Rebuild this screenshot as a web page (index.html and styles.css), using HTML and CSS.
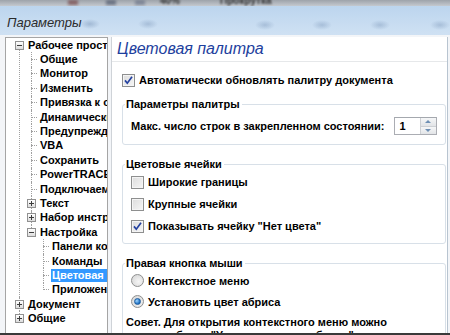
FILE: index.html
```html
<!DOCTYPE html>
<html lang="ru">
<head>
    <meta charset="UTF-8">
    <title>Параметры</title>
    <link rel="stylesheet" href="styles.css">
</head>
<body>
    <div class="screen">
        <div class="behind">
            <span class="smudge s1"></span>
            <span class="smudge s2"></span>
            <span class="smudge s3"></span>
            <span class="behind-text">40%</span>
            <span class="behind-text">Прокрутка</span>
        </div>

        <div class="titlebar">
            <span class="title">Параметры</span>
        </div>

        <div class="dialog">
            <div class="tree">
                <ul class="nodes root">
                    <li class="first">
                        <div class="node"><span class="twisty minus"></span><span class="label">Рабочее пространство</span></div>
                        <ul class="nodes">
                            <li><div class="node"><span class="twisty leaf"></span><span class="label">Общие</span></div></li>
                            <li><div class="node"><span class="twisty leaf"></span><span class="label">Монитор</span></div></li>
                            <li><div class="node"><span class="twisty leaf"></span><span class="label">Изменить</span></div></li>
                            <li><div class="node"><span class="twisty leaf"></span><span class="label">Привязка к объектам</span></div></li>
                            <li><div class="node"><span class="twisty leaf"></span><span class="label">Динамические направляющие</span></div></li>
                            <li><div class="node"><span class="twisty leaf"></span><span class="label">Предупреждения</span></div></li>
                            <li><div class="node"><span class="twisty leaf"></span><span class="label">VBA</span></div></li>
                            <li><div class="node"><span class="twisty leaf"></span><span class="label">Сохранить</span></div></li>
                            <li><div class="node"><span class="twisty leaf"></span><span class="label">PowerTRACE</span></div></li>
                            <li><div class="node"><span class="twisty leaf"></span><span class="label">Подключаемые модули</span></div></li>
                            <li><div class="node"><span class="twisty plus"></span><span class="label">Текст</span></div></li>
                            <li><div class="node"><span class="twisty plus"></span><span class="label">Набор инструментов</span></div></li>
                            <li>
                                <div class="node"><span class="twisty minus"></span><span class="label">Настройка</span></div>
                                <ul class="nodes">
                                    <li><div class="node"><span class="twisty leaf"></span><span class="label">Панели команд</span></div></li>
                                    <li><div class="node"><span class="twisty leaf"></span><span class="label">Команды</span></div></li>
                                    <li><div class="node"><span class="twisty leaf"></span><span class="label selected">Цветовая палитра</span></div></li>
                                    <li><div class="node"><span class="twisty leaf"></span><span class="label">Приложения</span></div></li>
                                </ul>
                            </li>
                        </ul>
                    </li>
                    <li><div class="node"><span class="twisty plus"></span><span class="label">Документ</span></div></li>
                    <li><div class="node"><span class="twisty plus"></span><span class="label">Общие</span></div></li>
                </ul>
            </div>

            <div class="page">
                <div class="page-title">Цветовая палитра</div>

                <div class="page-body">
                    <label class="option first-option">
                        <span class="checkbox checked"><svg width="13" height="13" viewBox="0 0 13 13"><path d="M3 6.4 L5.3 9.2 L10 2.8" fill="none" stroke="#2441a0" stroke-width="1.7"/></svg></span>
                        Автоматически обновлять палитру документа
                    </label>

                    <fieldset class="group">
                        <legend>Параметры палитры</legend>
                        <div class="spin-row">
                            <span>Макс. число строк в закрепленном состоянии:</span>
                            <span class="spinbox">
                                <span class="spin-value">1</span>
                                <span class="spin-buttons">
                                    <span class="spin-up"></span>
                                    <span class="spin-down"></span>
                                </span>
                            </span>
                        </div>
                    </fieldset>

                    <fieldset class="group">
                        <legend>Цветовые ячейки</legend>
                        <label class="option"><span class="checkbox"></span>Широкие границы</label>
                        <label class="option"><span class="checkbox"></span>Крупные ячейки</label>
                        <label class="option">
                            <span class="checkbox checked"><svg width="13" height="13" viewBox="0 0 13 13"><path d="M3 6.4 L5.3 9.2 L10 2.8" fill="none" stroke="#2441a0" stroke-width="1.7"/></svg></span>
                            Показывать ячейку "Нет цвета"
                        </label>
                    </fieldset>

                    <fieldset class="group">
                        <legend>Правая кнопка мыши</legend>
                        <label class="option radio-option"><span class="radio"></span>Контекстное меню</label>
                        <label class="option radio-option"><span class="radio on"></span>Установить цвет абриса</label>
                        <p class="hint">Совет. Для открытия контекстного меню можно также выбрать "Установить цвет абриса".</p>
                    </fieldset>
                </div>
            </div>
        </div>
        <div class="taskbar-edge"></div>
    </div>
</body>
</html>
```

FILE: styles.css
```css
/* Page and window frame */
body {
    margin: 0;
    font-family: "Liberation Sans", Arial, sans-serif;
    font-size: 11px;
    color: #000;
}

.screen {
    width: 450px;
    height: 335px;
    overflow: hidden;
    display: flex;
    flex-direction: column;
    background-color: #c9dcee;
    position: relative;
}

/* blurred toolbar of the app behind the dialog */
.behind {
    height: 6px;
    display: flex;
    align-items: center;
    gap: 40px;
    padding-left: 160px;
    background: linear-gradient(#9da3aa, #c4c9cf);
    overflow: hidden;
    position: relative;
}

.behind-text {
    font-weight: bold;
    font-size: 10px;
    color: #333;
    filter: blur(1px);
    margin-top: -6px;
}

.smudge {
    position: absolute;
    top: 0;
    width: 10px;
    height: 5px;
    background: #6c3030;
    filter: blur(1.5px);
    opacity: 0.6;
}

.s1 { left: 68px; }
.s2 { left: 106px; background: #404a60; }
.s3 { left: 135px; background: #606a80; }

.titlebar {
    height: 29px;
    display: flex;
    align-items: center;
    padding-left: 7px;
    background:
        radial-gradient(ellipse 10px 5px at 90px 18px, rgba(90, 120, 160, 0.35), transparent),
        radial-gradient(ellipse 10px 5px at 148px 18px, rgba(90, 120, 160, 0.3), transparent),
        radial-gradient(ellipse 10px 5px at 265px 19px, rgba(90, 120, 160, 0.3), transparent),
        radial-gradient(ellipse 10px 5px at 322px 19px, rgba(90, 120, 160, 0.3), transparent),
        radial-gradient(ellipse 10px 5px at 380px 19px, rgba(90, 120, 160, 0.3), transparent),
        radial-gradient(ellipse 10px 5px at 440px 19px, rgba(90, 120, 160, 0.3), transparent),
        linear-gradient(#bcd5ee, #cfe1f3);
}

.title {
    font-style: italic;
    font-size: 13px;
    color: #2b2b2b;
    margin-top: 3px;
}

.dialog {
    flex: 1;
    display: flex;
    gap: 3px;
    padding: 2px 2px 0 5px;
    background-color: #f3f5f8;
    min-height: 0;
}

.taskbar-edge {
    height: 2px;
    background-color: #3a3a3a;
}

/* Tree on the left */
.tree {
    width: 103px;
    box-sizing: border-box;
    flex: none;
    background-color: #fff;
    border: 1px solid #a5a5a5;
    border-bottom: 0;
    padding: 0 0 0 9px;
    overflow: hidden;
}

.nodes {
    list-style: none;
    margin: 0;
    padding: 0 0 0 12px;
}

.nodes.root {
    padding-left: 0;
}

.nodes li {
    position: relative;
}

.nodes li::before {
    content: "";
    position: absolute;
    left: 4px;
    top: 0;
    bottom: 0;
    border-left: 1px dotted #a0a0a0;
}

.nodes li:last-child::before {
    bottom: auto;
    height: 7px;
}

.root > li.first::before {
    top: 7px;
}

.node {
    height: 14.4px;
    display: flex;
    align-items: center;
    gap: 3px;
    white-space: nowrap;
    overflow: hidden;
}

.twisty {
    width: 9px;
    height: 9px;
    box-sizing: border-box;
    flex: none;
    position: relative;
    z-index: 1;
}

.plus, .minus {
    border: 1px solid #919191;
    background: linear-gradient(#fff, #dcdcdc);
}

.plus::before, .minus::before {
    content: "";
    position: absolute;
    left: 1px;
    top: 3px;
    width: 5px;
    height: 1px;
    background-color: #3c3c3c;
}

.plus::after {
    content: "";
    position: absolute;
    left: 3px;
    top: 1px;
    width: 1px;
    height: 5px;
    background-color: #3c3c3c;
}

.leaf::before {
    content: "";
    position: absolute;
    left: 4px;
    top: 4px;
    width: 6px;
    border-top: 1px dotted #a0a0a0;
}

.label {
    font-weight: bold;
    padding: 0 1px;
    line-height: 13px;
    min-width: 0;
    overflow: hidden;
}

.label.selected {
    flex: 1;
    background-color: #3399ff;
    color: #fff;
}

/* Right page */
.page {
    flex: 1;
    background-color: #fff;
    border-left: 1px solid #cfd3d8;
    border-right: 1px solid #b8c4d0;
    display: flex;
    flex-direction: column;
    min-width: 0;
}

.page-title {
    height: 24px;
    line-height: 24px;
    padding-left: 5px;
    font-style: italic;
    font-size: 16px;
    color: #1e3f9e;
    border-bottom: 1px solid #e6e8ea;
    flex: none;
}

.page-body {
    padding: 0 1px 0 10px;
}

.option {
    display: flex;
    align-items: center;
    gap: 4px;
    height: 22px;
    font-weight: bold;
    white-space: nowrap;
}

.first-option {
    height: 20px;
    margin-top: 8px;
}

.checkbox {
    width: 13px;
    height: 13px;
    box-sizing: border-box;
    border: 1px solid #8e8f8f;
    background: linear-gradient(135deg, #dcdcdc, #f6f6f6);
    box-shadow: inset 0 0 0 1px #f4f4f4;
    flex: none;
    position: relative;
}

.checkbox svg {
    position: absolute;
    left: -1px;
    top: -1px;
}

.radio {
    width: 13px;
    height: 13px;
    box-sizing: border-box;
    border-radius: 50%;
    border: 1px solid #8e8f8f;
    background: radial-gradient(circle at 60% 60%, #f6f6f6, #d2d2d2);
    flex: none;
    display: flex;
    align-items: center;
    justify-content: center;
}

.radio.on::after {
    content: "";
    width: 5px;
    height: 5px;
    border-radius: 50%;
    background: radial-gradient(circle at 35% 35%, #9fd6ff, #1a6cc0 70%);
    border: 1px solid #1d5c9e;
}

.group {
    margin: 7px 0 0;
    padding: 0 0 6px 8px;
    border: 1px solid #d8e0e8;
    border-radius: 3px;
    min-width: 0;
}

.group + .group {
    margin-top: 12px;
}

.group legend {
    font-weight: bold;
    padding: 0 2px 0 1px;
    margin-left: -6px;
    line-height: 14px;
}

.spin-row {
    display: flex;
    align-items: center;
    gap: 9px;
    height: 18px;
    margin: 6px 0 3px;
    font-weight: bold;
    white-space: nowrap;
}

.spinbox {
    display: flex;
    height: 18px;
    width: 43px;
    box-sizing: border-box;
    border: 1px solid #abadb3;
    border-top-color: #a4a8ae;
}

.spin-value {
    flex: 1;
    padding-left: 5px;
    line-height: 16px;
}

.spin-buttons {
    width: 15px;
    display: flex;
    flex-direction: column;
    border-left: 1px solid #cdd0d4;
}

.spin-up, .spin-down {
    flex: 1;
    background: linear-gradient(#f6f7f8, #e2e4e7);
    position: relative;
}

.spin-up {
    border-bottom: 1px solid #cdd0d4;
}

.spin-up::after, .spin-down::after {
    content: "";
    position: absolute;
    left: 4px;
    top: 2px;
    border-left: 3px solid transparent;
    border-right: 3px solid transparent;
}

.spin-up::after {
    border-bottom: 3px solid #6e8fb4;
}

.spin-down::after {
    border-top: 3px solid #6e8fb4;
}

.radio-option {
    height: 21px;
}

.hint {
    margin: 4px 0 0 -5px;
    font-weight: bold;
    line-height: 13px;
    width: 270px;
}
```
